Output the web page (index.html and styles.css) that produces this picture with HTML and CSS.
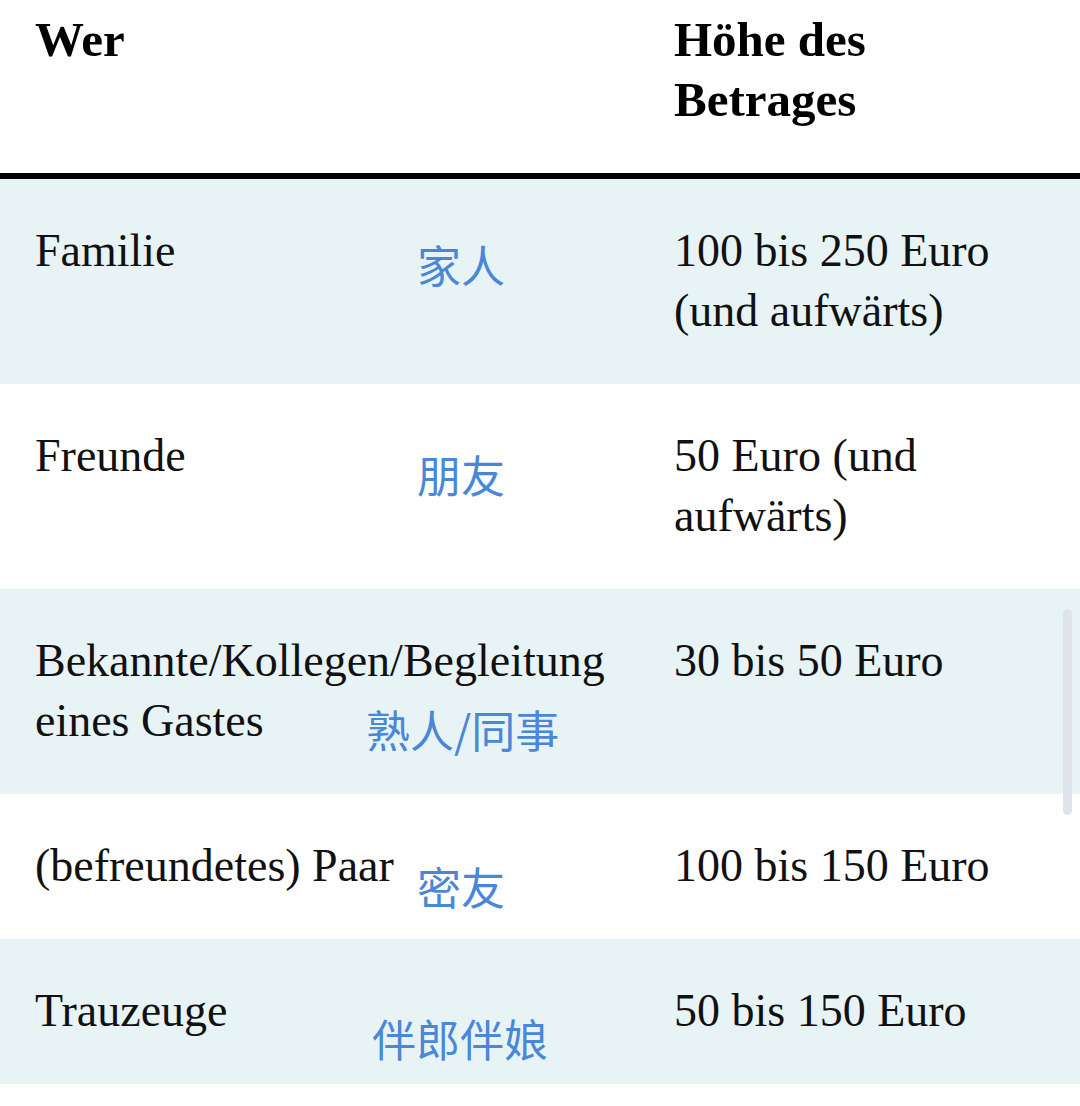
FILE: index.html
```html
<!DOCTYPE html>
<html lang="de">
<head>
<meta charset="utf-8">
<title>Geldgeschenk Hochzeit</title>
<link rel="stylesheet" href="styles.css">
</head>
<body>
<div class="page">
  <table class="gift-table">
    <thead>
      <tr>
        <th class="col-who">Wer</th>
        <th class="col-amount">Höhe des Betrages</th>
      </tr>
    </thead>
    <tbody>
      <tr class="row-tint">
        <td class="col-who"><span class="who">Familie</span><span class="note note-family">家人</span></td>
        <td class="col-amount">100 bis 250 Euro (und aufwärts)</td>
      </tr>
      <tr>
        <td class="col-who"><span class="who">Freunde</span><span class="note note-friends">朋友</span></td>
        <td class="col-amount">50 Euro (und aufwärts)</td>
      </tr>
      <tr class="row-tint">
        <td class="col-who"><span class="who">Bekannte/Kollegen/Begleitung</span><br><span class="who">eines Gastes</span><span class="note note-colleagues">熟人/同事</span></td>
        <td class="col-amount">30 bis 50 Euro</td>
      </tr>
      <tr>
        <td class="col-who"><span class="who">(befreundetes) Paar</span><span class="note note-couple">密友</span></td>
        <td class="col-amount">100 bis 150 Euro</td>
      </tr>
      <tr class="row-tint">
        <td class="col-who"><span class="who">Trauzeuge</span><span class="note note-witness">伴郎伴娘</span></td>
        <td class="col-amount">50 bis 150 Euro</td>
      </tr>
    </tbody>
  </table>
  <div class="scrollbar"></div>
</div>
</body>
</html>
```
FILE: styles.css
```css
html, body {
  margin: 0;
  padding: 0;
  background: #ffffff;
}

.page {
  position: relative;
  width: 1080px;
  min-height: 1106px;
}

.gift-table {
  width: 1080px;
  border-collapse: collapse;
  table-layout: fixed;
  font-family: "Liberation Serif", "Times New Roman", serif;
  color: #111111;
}

.gift-table th,
.gift-table td {
  vertical-align: top;
  text-align: left;
  line-height: 60px;
}

.gift-table th {
  font-size: 49px;
  font-weight: 700;
  color: #000000;
  padding-top: 10px;
  padding-bottom: 43px;
  height: 120px;
  border-bottom: 6px solid #000000;
}

.gift-table td {
  font-size: 46px;
  font-weight: 400;
  padding-top: 42px;
  padding-bottom: 43px;
  position: relative;
}

.col-who {
  width: 639px;
  padding-left: 35px;
  padding-right: 0;
}

.col-amount {
  padding-left: 0;
  padding-right: 60px;
}

.row-tint td {
  background: #e8f3f6;
}

.note {
  position: absolute;
  font-family: "Noto Sans CJK SC", "Noto Sans", sans-serif;
  font-size: 44px;
  line-height: 1;
  font-weight: 400;
  color: #4a87d6;
  white-space: nowrap;
}

.note-family { left: 417px; top: 63px; }
.note-friends { left: 417px; top: 68px; }
.note-colleagues { left: 366px; top: 118px; }
.note-couple { left: 417px; top: 70px; }
.note-witness { left: 372px; top: 77px; }

.scrollbar {
  position: absolute;
  left: 1063px;
  top: 609px;
  width: 9px;
  height: 206px;
  border-radius: 5px;
  background: #dfe4eb;
}
```
